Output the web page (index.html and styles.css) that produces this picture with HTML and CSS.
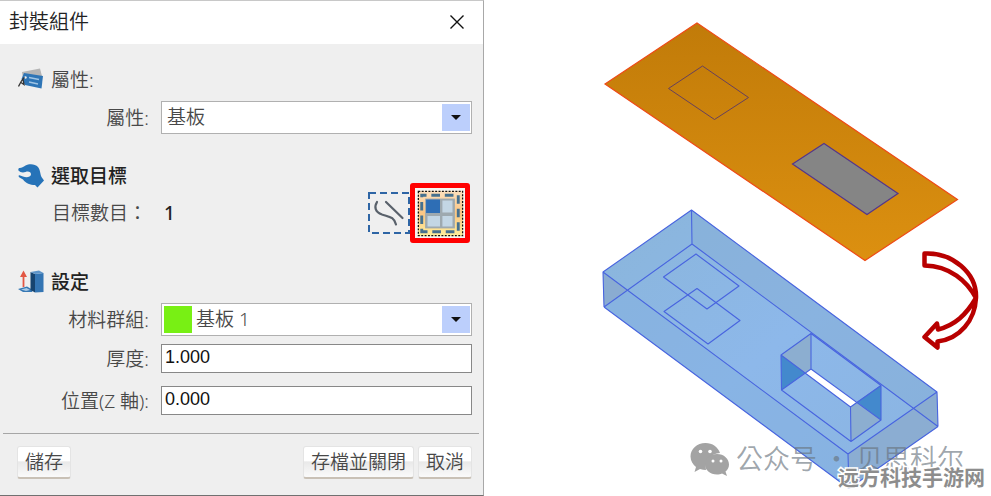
FILE: index.html
```
<!DOCTYPE html>
<html lang="zh-Hant">
<head>
<meta charset="utf-8">
<meta name="viewport" content="width=device-width, initial-scale=1">
<title>封裝組件</title>
<link rel="stylesheet" href="styles.css">
</head>
<body>
<main class="workspace">
  <form class="panel">
    <header class="titlebar">
      <h1 class="title">封裝組件</h1>
      <button class="close" type="button" aria-label="Close">
        <svg width="14" height="14" viewBox="0 0 14 14"><path d="M0.5 0.5 13.500 13.500M13.500 0.500 0.500 13.500" fill="none" stroke="#111" stroke-width="1.400"/></svg>
      </button>
    </header>

    <section class="section">
      <h2 class="heading heading-light">
        <svg class="icon" viewBox="0 0 26 24">
          <path d="M4 4 22 0.500 24 8 22 13 5 11Z" fill="#b5b5b5"/>
          <path d="M6 5 25 8 23.500 20.500 7 17 3.500 11Z" fill="#2e75b6"/>
          <path d="M11 9.500 21 11.500M11 14 20 16" stroke="#9fc4e4" stroke-width="1.400" fill="none"/>
          <circle cx="7.500" cy="9.500" r="1.200" fill="#efefef"/>
          <path d="M6.500 9.500C4 11 3 14 0.500 18.500M5 11 6 16.500 3 14.500" stroke="#333" stroke-width="1.300" fill="none"/>
        </svg>屬性:</h2>
      <div class="row row-select">
        <label class="label" for="attr">屬性:</label>
        <span class="combo">
          <select id="attr"><option>基板</option></select>
          <span class="arrow" aria-hidden="true"></span>
        </span>
      </div>
    </section>

    <section class="section section-target">
      <h2 class="heading">
        <svg class="icon" viewBox="0 0 26 24">
          <path d="M1 4C3 4.500 5 3 7.500 1.500C11 -0.500 17 -0.500 20 3C22.500 6 22 10 23.500 13L26 16.500 19.500 23.500 17 21C12 21 8 19.500 5 15.500L1.500 13.500C0 12.500.5 11 1.500 11.200L5 12.500C8 13.800 12.500 13.500 13 10.500C13 7.500 10 7 7.500 8C5 9 2 8.500 0.500 6.500C0 5.500 0.500 4.500 1 4Z" fill="#2673b8"/>
        </svg>選取目標</h2>
      <div class="target">
        <span class="count">目標數目： <output>1</output></span>
        <button class="pick" type="button" aria-label="Curve">
          <svg width="42" height="42" viewBox="0 0 42 42" fill="none">
            <rect x="1" y="1" width="40" height="40" stroke="#2e65a5" stroke-width="2" stroke-dasharray="7 4"/>
            <path d="M9 10C6 15 7 20 14 22.500C22 25 26 25 28 32.500M18 10 34.500 26" stroke="#59616b" stroke-width="2.200" stroke-linecap="round"/>
          </svg>
        </button>
        <button class="pick pick-on" type="button" aria-label="Face" aria-pressed="true">
          <svg width="50" height="50" viewBox="0 0 52 52">
            <defs><linearGradient id="glow" x1="0" y1="0" x2="0" y2="1"><stop offset="0" stop-color="#fde0bd"/><stop offset=".5" stop-color="#fbc683"/><stop offset="1" stop-color="#ffef9b"/></linearGradient></defs>
            <rect width="52" height="52" fill="#f7f4ef"/>
            <rect x="3" y="3" width="47" height="47" fill="url(#glow)"/>
            <rect x="3.500" y="3.500" width="46" height="46" fill="none" stroke="#111" stroke-width="1.300" stroke-dasharray="2 1.500"/>
            <rect x="7" y="7.500" width="38" height="38" fill="none" stroke="#46718f" stroke-width="3" stroke-dasharray="9 5" stroke-dashoffset="4"/>
            <rect x="10.500" y="11" width="31" height="31" fill="#9ea9af"/>
            <path d="M11.500 12H26V26H11.500Z" fill="#2e6eb5"/>
            <path d="M28.500 13H39V25.500H28.500ZM13 29H26V40H13ZM28.500 29H39V40H28.500Z" fill="#c3d6e4"/>
          </svg>
        </button>
      </div>
    </section>

    <section class="section section-settings">
      <h2 class="heading">
        <svg class="icon" viewBox="0 0 26 24">
          <path d="M0 19 9 16.500 15 20 14 22 5 22Z" fill="#3778b4"/>
          <path d="M3 19.500 8.500 18 12 20 8 21Z" fill="#a8c9e4"/>
          <path d="M12.500 2 17 4 17 22.500 12.500 20Z" fill="#17446f"/>
          <path d="M17 4 25.500 3V22L17 22.500Z" fill="#3475b3"/>
          <path d="M12.500 2 21 0.500 25.500 3 17 4Z" fill="#5d94c8"/>
          <path d="M5.500 6V17" stroke="#e25744" stroke-width="1.800"/><path d="M5.500 0.500 9 7H2Z" fill="#e25744"/>
        </svg>設定</h2>
      <div class="row row-select">
        <label class="label" for="group">材料群組:</label>
        <span class="combo combo-swatch">
          <span class="swatch" aria-hidden="true"></span>
          <select id="group"><option>基板 1</option></select>
          <span class="arrow" aria-hidden="true"></span>
        </span>
      </div>
      <div class="row">
        <label class="label" for="thick">厚度:</label>
        <input id="thick" type="text" value="1.000">
      </div>
      <div class="row">
        <label class="label" for="pos">位置(Z 軸):</label>
        <input id="pos" type="text" value="0.000">
      </div>
    </section>

    <footer class="actions">
      <button class="action action-save" type="button">儲存</button>
      <button class="action" type="button">存檔並關閉</button>
      <button class="action" type="button">取消</button>
    </footer>
  </form>

  <section class="scene">
    <svg class="drawing" viewBox="484 0 507 496">
      <defs>
        <linearGradient id="sheet" x1="0" y1="0" x2="0" y2="1"><stop offset="0" stop-color="#c17b09"/><stop offset="1" stop-color="#dc9010"/></linearGradient>
        <linearGradient id="body" x1="0" y1="0" x2="1" y2="1"><stop offset="0" stop-color="#8ab5da"/><stop offset=".5" stop-color="#8db8ea"/><stop offset="1" stop-color="#8ab4e0"/></linearGradient>
      </defs>
      <path d="M697 23 957.500 199.500 865 260.500 605 84Z" fill="url(#sheet)" stroke="#ee4a16" stroke-width="1.200"/>
      <path d="M702.500 66 748.500 97.500 714.500 119.500 668.500 88.500Z" fill="none" stroke="#67405c"/>
      <path d="M824 143.500 898 193.500 867 214.500 792.500 164Z" fill="#858585" stroke="#54368c" stroke-width="1.200"/>

      <path d="M691.500 210 937 392 938 426.500 849 488.500 604 307 603 272Z" fill="url(#body)"/>
      <path d="M691.500 210 937 392 938 426.500 692 244Z" fill="#86aed6" opacity=".5"/>
      <path d="M603 272 848 454 849 488.500 604 307Z" fill="#83afe0" opacity=".5"/>
      <path d="M603 272 627 290 604 307ZM914 409 937 392 938 426.500ZM848 454 914 409 938 426.500 849 488.500Z" fill="#8ba9cb" opacity=".7"/>
      <path d="M811 333 781 355 805 373 811 369ZM850.500 407 857 402 881 420 851 441Z" fill="#8caed0"/>
      <path d="M811 369 857 402 850.500 407 805 373Z" fill="#fff"/>
      <path d="M781 355 805 373 781.500 390ZM881 385 857 402 881 420Z" fill="#4389cd"/>
      <g fill="none" stroke="#4864df" stroke-width="1.100" stroke-linejoin="round">
        <path d="M691.500 210 937 392 848 454 603 272ZM692 244 938 426.500M604 307 692 244M604 307 849 488.500 938 426.500M691.500 210 692 244M603 272 604 307M848 454 849 488.500M937 392 938 426.500"/>
        <path d="M696 254 739 286 707 309 663.500 277ZM697 288.500 740 320.500 708 344 664 311.500Z"/>
        <path d="M811 333.500 881 385.500 850.500 407 781 355ZM811 369 781.500 390 851 441.500 881 420ZM811 333.500V369M781 355 781.500 390M850.500 407 851 441.500M881 385.500V420"/>
      </g>

      <path d="M924.500 253.500V265.500C950 266 967 281 976 298C966 315 955 325 938 329.500L937 323.500 924.500 337 937.500 347.500V341.500C960 339 975 320 976 298C977 273 952 252 924.500 253.500Z" fill="#fff" stroke="#b80000" stroke-width="4.500" stroke-linejoin="round"/>

      <g class="wechat">
        <path d="M705.500 443C697 443 690.500 449 690.500 456.500C690.500 461 693 464.500 696 467L694.500 472 700 469C702 469.700 704 470 706 470C704 461 711 453.500 720 453C718 447 712.500 443 705.500 443Z"/>
        <path d="M717 454C709.500 454 705 459 705 464.500C705 470 710 474.500 717 474.500C719 474.500 720.500 474.200 722 473.500L727 476 725.500 471.500C727.500 470 729 467.500 729 464.500C729 459 724 454 717 454Z"/>
        <g fill="#fff"><circle cx="700.500" cy="451.500" r="1.800"/><circle cx="710" cy="451.500" r="1.800"/><circle cx="713" cy="461" r="1.500"/><circle cx="721" cy="461" r="1.500"/></g>
      </g>
      <text class="mark" x="736" y="469">公众号 · 贝思科尔</text>
      <text class="site" x="838" y="485">远方科技手游网</text>
    </svg>
  </section>
</main>
</body>
</html>
```
FILE: styles.css
```
* {
  box-sizing: border-box;
}

body {
  margin: 0;
  background: #fff;
  color: #484848;
  font: 350 19px/28px "Noto Sans", "Noto Sans CJK TC", sans-serif;
}

.workspace {
  display: grid;
  grid-template-columns: 484fr 507fr;
  min-height: 100vh;
}

.panel {
  display: flex;
  flex-direction: column;
  background: #efefef;
  border-top: 1px solid #c8c8c8;
  border-right: 1px solid #a8a8a8;
  border-bottom: 1px solid #707070;
}

.titlebar {
  display: flex;
  align-items: center;
  justify-content: space-between;
  height: 43px;
  padding: 0 19px 2px 9px;
  background: #fff;
}

.title {
  margin: 0;
  color: #222;
  font-size: 20px;
  font-weight: 350;
}

button,
input,
select {
  margin: 0;
  color: inherit;
  font: inherit;
}

.close,
.pick {
  display: flex;
  padding: 0;
  border: 0;
  background: none;
}

.section {
  padding: 22px 11px 0 18px;
}

.section-target {
  padding-top: 28px;
}

.section-settings {
  padding-top: 32px;
}

.heading {
  display: flex;
  align-items: center;
  gap: 7px;
  margin: 0;
  color: #222;
  font-size: 19px;
  font-weight: 500;
}

.heading-light {
  color: #484848;
  font-weight: 350;
}

.icon {
  width: 26px;
  height: 24px;
}

.row {
  display: grid;
  grid-template-columns: 131px 1fr;
  align-items: center;
  column-gap: 12px;
  margin-top: 13px;
}

.row-select {
  margin-top: 7px;
}

.row-select + .row {
  margin-top: 8px;
}

.label {
  text-align: right;
}

.combo {
  display: flex;
  position: relative;
  height: 33px;
  border: 1px solid #b0b0b0;
  background: #fff;
}

.combo select {
  flex: 1;
  appearance: none;
  padding: 0 34px 1px 5px;
  border: 0;
  background: transparent;
}

.arrow {
  position: absolute;
  top: 2px;
  right: 1px;
  bottom: 2px;
  display: grid;
  place-items: center;
  width: 28px;
  background: #bccffc;
  pointer-events: none;
}

.arrow::after {
  content: "";
  border: 5px solid transparent;
  border-top-color: #111;
  border-bottom: 0;
}

.swatch {
  width: 28px;
  margin: 2px 0 2px 2px;
  background: #78f014;
}

.combo-swatch select {
  padding-left: 4px;
}

input {
  width: 100%;
  height: 29px;
  padding: 0 4px 3px 3px;
  border: 1px solid #888;
  background: #fff;
  color: #111;
  font: 400 18px "Liberation Sans", sans-serif;
}

.target {
  display: flex;
  align-items: center;
  height: 46px;
  padding-left: 34px;
}

.count {
  flex: 1;
}

.count output {
  margin-left: 12px;
  color: #222;
  font-weight: 500;
}

.pick-on {
  margin: -7px 2px -7px 0;
  border: 5px solid #f00;
  border-radius: 3px;
}

.actions {
  display: flex;
  gap: 4px;
  margin: 18px 4px 0 3px;
  padding: 12px 7px 16px 14px;
  border-top: 1px solid #a6a6a6;
}

.action {
  height: 33px;
  padding: 0 7px;
  border: 1px solid #e4e4e4;
  border-bottom: 2px solid #c9c1b6;
  border-radius: 3px;
  background: linear-gradient(#fff 45%, #e9e9e9 50%, #fafafa);
}

.action-save {
  margin-right: auto;
}

.drawing {
  display: block;
  width: 100%;
}

.wechat {
  fill: #a3a3a3;
}

.mark {
  fill: #68737d;
  fill-opacity: 0.65;
  font: 350 27px "Noto Sans CJK SC", sans-serif;
}

.site {
  fill: #8d8d8d;
  stroke: #fff;
  stroke-width: 3px;
  paint-order: stroke;
  font: 700 21px "Noto Sans CJK SC", sans-serif;
}
```
